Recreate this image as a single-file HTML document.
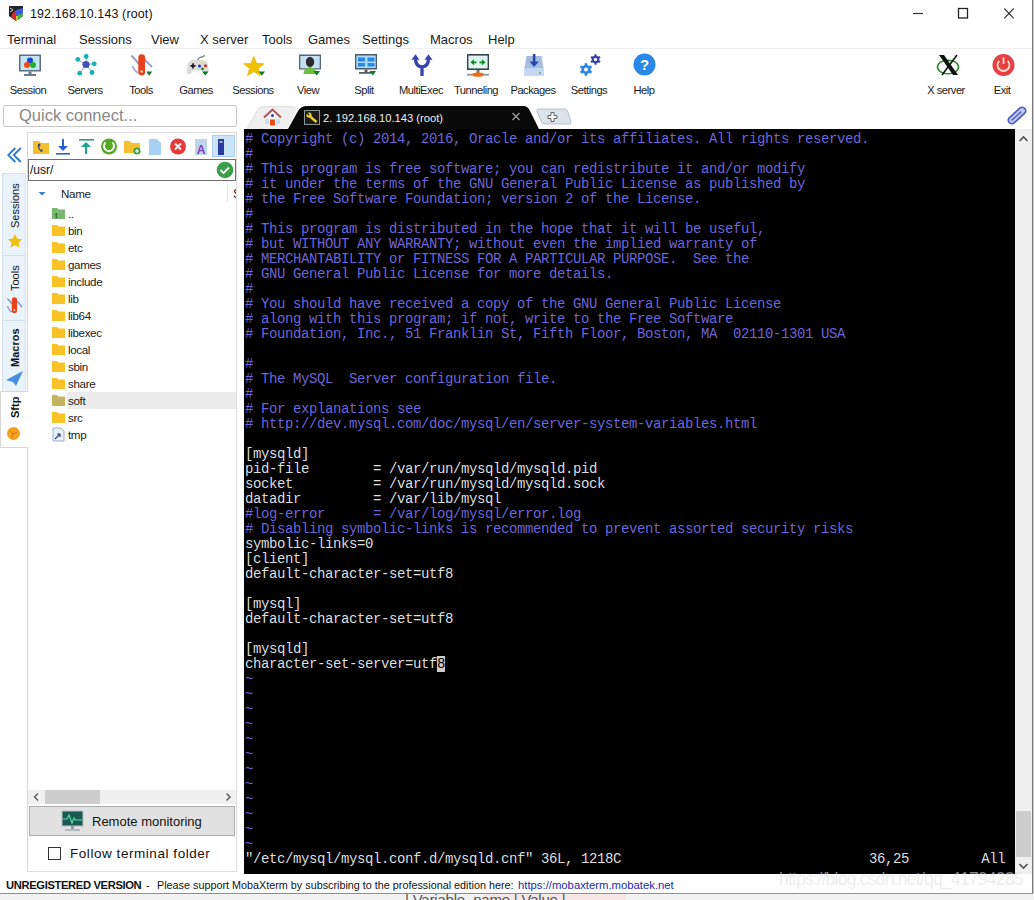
<!DOCTYPE html>
<html><head><meta charset="utf-8">
<style>
*{margin:0;padding:0;box-sizing:border-box}
html,body{width:1034px;height:900px;overflow:hidden;background:#fff;font-family:"Liberation Sans",sans-serif;color:#000}
.a{position:absolute}
#title{left:30px;top:6.5px;font-size:12.4px;letter-spacing:0.17px;color:#111}
.menu span{position:absolute;top:31.5px;font-size:13px;color:#1a1a1a}
.tb{position:absolute;top:84px;font-size:11.2px;letter-spacing:-0.5px;color:#1a1a1a;text-align:center;width:70px}
#term{left:244px;top:129px;width:771px;height:745px;background:#000}
#tt{position:absolute;left:245px;top:131.5px;font-family:"Liberation Mono",monospace;font-size:14px;letter-spacing:-0.4px;line-height:15px;white-space:pre;color:#dedede}
.c{color:#6e64dc}
</style></head><body>
<!-- title bar -->
<svg class="a" style="left:8px;top:5px" width="17" height="17" viewBox="0 0 17 17">
 <path d="M1 1 h14 v10 l-7 5 -7 -5z" fill="#222"/>
 <path d="M8 5 l7 -2 v8 l-7 5z" fill="#3a5ad8"/>
 <path d="M8 11 l7 0 -7 5z" fill="#e0c020"/>
 <path d="M4 9 l4 -4 v11 l-5 -4z" fill="#d82a2a"/>
 <path d="M10 10 l5 -2 v3 l-5 4z" fill="#40b040"/>
 <path d="M2 3 l3 2 -3 2" stroke="#fff" stroke-width="0.8" fill="none"/>
</svg>
<div id="title" class="a">192.168.10.143 (root)</div>
<svg class="a" style="left:900px;top:0" width="130" height="28" viewBox="900 0 130 28">
 <line x1="913" y1="13.5" x2="923" y2="13.5" stroke="#333" stroke-width="1.2"/>
 <rect x="958.5" y="8.5" width="9" height="9.5" fill="none" stroke="#222" stroke-width="1.3"/>
 <path d="M1004.3 8.5 L1013.7 18.3 M1013.7 8.5 L1004.3 18.3" stroke="#333" stroke-width="1.1"/>
</svg>
<!-- menu -->
<div class="menu">
<span style="left:7px">Terminal</span>
<span style="left:79px">Sessions</span>
<span style="left:151px">View</span>
<span style="left:200px">X server</span>
<span style="left:262px">Tools</span>
<span style="left:308px">Games</span>
<span style="left:362px">Settings</span>
<span style="left:430px">Macros</span>
<span style="left:488px">Help</span>
</div>
<div class="a" style="left:0;top:48px;width:1034px;height:1px;background:#efefef"></div>
<!-- toolbar icons -->
<svg class="a" style="left:0;top:48px" width="1034" height="36" viewBox="0 48 1034 36">
 <!-- Session -->
 <rect x="19" y="54.5" width="22" height="17" fill="#5e6e7c"/>
 <rect x="20.5" y="56" width="19" height="14" fill="#c4e4f6"/>
 <rect x="28.5" y="71.5" width="3" height="3" fill="#6e7a86"/>
 <rect x="24" y="74" width="12" height="2" fill="#6e7a86"/>
 <circle cx="30" cy="60.5" r="3" fill="#1a40d8"/>
 <circle cx="27" cy="65" r="3" fill="#f04a10"/>
 <circle cx="33" cy="65" r="3" fill="#20b030"/>
 <!-- Servers -->
 <g stroke="#8aa8d0" stroke-width="1"><line x1="86" y1="64.5" x2="77.8" y2="59.4"/><line x1="86" y1="64.5" x2="86.2" y2="56.5"/><line x1="86" y1="64.5" x2="94.2" y2="63.8"/><line x1="86" y1="64.5" x2="92" y2="72.5"/><line x1="86" y1="64.5" x2="79.7" y2="73.2"/></g>
 <g fill="#14b0b4"><circle cx="77.8" cy="59.4" r="2.4"/><circle cx="86.2" cy="56.5" r="2.4"/><circle cx="94.2" cy="63.8" r="2.4"/><circle cx="92" cy="72.5" r="2.4"/><circle cx="79.7" cy="73.2" r="2.4"/></g>
 <circle cx="86" cy="64.5" r="3.6" fill="#4050b8"/>
 <!-- Tools -->
 <path d="M131.5 55.5 L139 64" stroke="#98a4cc" stroke-width="2.2"/>
 <path d="M144 59 L152 67" stroke="#98a4cc" stroke-width="2"/>
 <path d="M132.5 66 q1 4 6 7" stroke="#a8a8d8" stroke-width="1.8" fill="none"/>
 <rect x="138.3" y="54.3" width="6.8" height="21.2" rx="3.4" fill="#e8401c"/>
 <circle cx="141.7" cy="71.5" r="1.2" fill="#ffe8d8"/>
 <path d="M146.2 71.5 h6 l-3 4.3z" fill="#107a20"/>
 <!-- Games -->
 <path d="M188 63 q2 -3 6 -3 h8 q4 0 5.5 3 l1 6 q0.5 4 -3 4 l-3 -2.5 h-9 l-3 3.5 q-3.5 1 -3.8 -2.5z" fill="#dcdcdc"/>
 <path d="M197.5 60 q1 -2.5 4 -3 q3 -0.5 3 -2" stroke="#808898" stroke-width="1.3" fill="none"/>
 <rect x="190.5" y="65" width="5" height="1.8" fill="#222"/><rect x="192.1" y="63.3" width="1.8" height="5.2" fill="#222"/>
 <circle cx="199.5" cy="66" r="1.5" fill="#1a2ac0"/><circle cx="205.5" cy="65.8" r="1.5" fill="#d02020"/><circle cx="202.2" cy="62.6" r="1.3" fill="#e8e070"/><circle cx="202.5" cy="69" r="1.4" fill="#208a20"/>
 <path d="M202 71.5 h6.5 l-3.25 4z" fill="#0a7a1a"/>
 <!-- Sessions star -->
 <path d="M253.80 56.20 L256.50 63.28 L264.07 63.66 L258.17 68.42 L260.15 75.74 L253.80 71.60 L247.45 75.74 L249.43 68.42 L243.53 63.66 L251.10 63.28z" fill="#f2c000" stroke="#e0b000" stroke-width="0.6"/>
 <path d="M258.5 71.5 h6.5 l-3.25 4.3z" fill="#0a7a1a"/>
 <!-- View -->
 <rect x="299" y="54.5" width="22" height="15" fill="#58646e"/>
 <rect x="300.3" y="56" width="19.4" height="12.3" fill="#c4e0f4"/>
 <path d="M303.5 74 q0 -6 6.5 -6.5 q6.5 0.5 6.5 6.5z" fill="#6cc040"/>
 <rect x="308.5" y="65" width="3" height="3" fill="#c0a020"/>
 <ellipse cx="310" cy="62" rx="4.2" ry="5" fill="#2a2a30"/>
 <path d="M313.5 71 h6.5 l-3.25 4.5z" fill="#0a7a1a"/>
 <!-- Split -->
 <rect x="355" y="54" width="22" height="15.5" fill="#505a64"/>
 <rect x="356.3" y="55.5" width="19.4" height="12.5" fill="#a8dcf8"/>
 <rect x="358" y="57.5" width="7" height="4" fill="#2a88e0"/><rect x="367.5" y="57.5" width="7" height="4" fill="#2a88e0"/>
 <rect x="358" y="63" width="7" height="3.5" fill="#2a88e0"/><rect x="367.5" y="63" width="7" height="3.5" fill="#2a88e0"/>
 <rect x="364.5" y="69.5" width="3" height="3" fill="#555e66"/><rect x="359" y="72" width="12" height="1.8" fill="#555e66"/>
 <path d="M369.5 71 h6.5 l-3.25 4.5z" fill="#0a7a1a"/>
 <!-- MultiExec -->
 <path d="M422 76 V67.5 M415.5 58.5 q0 8 6.5 8.5 q6.5 -0.5 6.5 -8.5" stroke="#3a44b0" stroke-width="3.3" fill="none"/>
 <path d="M411.5 59.8 L415.5 54.3 L419.5 59.8z M424.5 59.8 L428.5 54.3 L432.5 59.8z" fill="#3a44b0"/>
 <!-- Tunneling -->
 <rect x="467" y="54" width="22" height="16" fill="#3a424a"/>
 <rect x="468.4" y="55.6" width="19.2" height="12.8" fill="#dcf4f0"/>
 <path d="M470.5 62.3 l3.5 -3 v6z M485.5 62.3 l-3.5 -3 v6z" fill="#108a20"/><rect x="473" y="61.5" width="3.5" height="1.8" fill="#108a20"/><rect x="479.5" y="61.5" width="3.5" height="1.8" fill="#108a20"/>
 <rect x="476.5" y="70" width="3" height="3" fill="#707a70"/>
 <rect x="467" y="73.8" width="22" height="1.8" fill="#8898a8"/>
 <ellipse cx="478" cy="74.6" rx="6" ry="2.2" fill="#f06a10"/>
 <!-- Packages -->
 <path d="M526.5 56 h15 l2 12 v7.5 h-19 v-7.5z" fill="#a6bde2"/>
 <rect x="524.5" y="68" width="19" height="7.5" fill="#c4d6f0"/>
 <circle cx="540" cy="73" r="0.9" fill="#50b050"/>
 <rect x="532.8" y="54" width="2.6" height="9" fill="#2a48a8"/>
 <path d="M529.5 61.5 h9.2 l-4.6 5.5z" fill="#2a48a8"/>
 <!-- Settings gears -->
 <g transform="translate(586 69.5)">
  <circle r="4.6" fill="#2a86e8"/>
  <g stroke="#2a86e8" stroke-width="2.6"><line x1="0" y1="-6.3" x2="0" y2="6.3"/><line x1="-5.5" y1="-3.15" x2="5.5" y2="3.15"/><line x1="-5.5" y1="3.15" x2="5.5" y2="-3.15"/></g>
  <circle r="2" fill="#fff"/>
 </g>
 <g transform="translate(595.5 59.5)">
  <circle r="3.8" fill="#3040a8"/>
  <g stroke="#3040a8" stroke-width="2.2"><line x1="0" y1="-5.2" x2="0" y2="5.2"/><line x1="-4.5" y1="-2.6" x2="4.5" y2="2.6"/><line x1="-4.5" y1="2.6" x2="4.5" y2="-2.6"/></g>
  <circle r="1.7" fill="#fff"/>
 </g>
 <!-- Help -->
 <circle cx="644.5" cy="64.5" r="11" fill="#2a88e8"/>
 <text x="644.5" y="70" font-family="Liberation Sans" font-weight="bold" font-size="15" fill="#fff" text-anchor="middle">?</text>
 <!-- X server -->
 <ellipse cx="948" cy="67" rx="10.5" ry="6.8" stroke="#2a8a2a" stroke-width="1.6" fill="none"/>
 <path d="M939 55 h5 l14 20 h-5z" fill="#111"/>
 <path d="M957 55 l-15 20" stroke="#111" stroke-width="1.5"/>
 <!-- Exit -->
 <circle cx="1003.5" cy="65" r="11" fill="#e84040"/>
 <path d="M999.2 60.8 a6 6 0 1 0 8.6 0" stroke="#fde0d0" stroke-width="1.8" fill="none"/>
 <line x1="1003.5" y1="57.5" x2="1003.5" y2="64" stroke="#fde0d0" stroke-width="1.8"/>
</svg>
<!-- toolbar labels -->
<div class="tb" style="left:-7px">Session</div>
<div class="tb" style="left:50px">Servers</div>
<div class="tb" style="left:106px">Tools</div>
<div class="tb" style="left:161px">Games</div>
<div class="tb" style="left:218px">Sessions</div>
<div class="tb" style="left:273px">View</div>
<div class="tb" style="left:329px">Split</div>
<div class="tb" style="left:386px">MultiExec</div>
<div class="tb" style="left:441px">Tunneling</div>
<div class="tb" style="left:498px">Packages</div>
<div class="tb" style="left:554px">Settings</div>
<div class="tb" style="left:609px">Help</div>
<div class="tb" style="left:911px">X server</div>
<div class="tb" style="left:967px">Exit</div>
<!-- quick connect -->
<div class="a" style="left:3px;top:105px;width:234px;height:22px;border:1px solid #c8c8c8;border-radius:3px;font-size:16.5px;color:#888;padding:0 0 0 15px;line-height:19px">Quick connect...</div>
<!-- tabs -->
<svg class="a" style="left:240px;top:100px" width="794" height="32" viewBox="240 100 794 32">
 <path d="M246 129 L257 110 Q259 106 264 106 H293 Q297 106 296 110 L288 129z" fill="#f0eff0"/>
 <path d="M247 129 L257.5 110.5 Q259.5 106.5 264 106.5 H293" stroke="#e0e0e0" fill="none"/>
 <!-- house -->
 <path d="M265 124 h15 v2 h-15z" fill="#e8eef4"/>
 <path d="M266 118 l6.5 -6.5 6.5 6.5 v7 h-13z" fill="#f4f6f8"/>
 <rect x="265" y="119" width="4" height="5" fill="#c8dcf0"/>
 <rect x="276" y="119" width="4" height="5" fill="#c8dcf0"/>
 <path d="M264 117.5 l8.5 -8 8.5 8" stroke="#a85a60" stroke-width="2" fill="none"/>
 <rect x="270" y="119.5" width="5" height="6" fill="#e84a10"/>
 <circle cx="272.5" cy="115.5" r="1.5" fill="#2a4a70"/>
 <!-- active tab -->
 <path d="M288 129 L298 111 Q301 106 307 106 H523 Q528 106 530 111 L539 129z" fill="#0a0a0a"/>
 <rect x="304.5" y="110.5" width="15" height="14" fill="#1c1c1c" stroke="#8a9494"/>
 <path d="M309.5 116 L316.5 122" stroke="#f0d020" stroke-width="2.4"/>
 <circle cx="309" cy="115" r="2.6" fill="#f0d020"/>
 <path d="M307 113 l2 2" stroke="#1c1c1c" stroke-width="1.4"/>
 <path d="M512.5 113 l7 7 M519.5 113 l-7 7" stroke="#a8a8a8" stroke-width="1.1"/>
 <!-- new tab -->
 <path d="M538 109 H564 Q567 109 568 112 L571 122 Q571.5 124 569 124 H545 Q542 124 541 121 L537 112 Q536.5 109 538 109z" fill="#dde3ea" stroke="#b8c0c8"/>
 <path d="M551 112.5 h3 v3 h3 v3 h-3 v3 h-3 v-3 h-3 v-3 h3z" fill="#fff" stroke="#606060" stroke-width="1"/>
 <!-- paperclip -->
 <g transform="rotate(48 1017 115.5)">
  <rect x="1013.5" y="105" width="7" height="21" rx="3.5" fill="#c0c8f8" stroke="#4a58c0" stroke-width="1.6"/>
  <path d="M1017 123 V110" stroke="#4a58c0" stroke-width="1.4"/>
 </g>
</svg>
<div class="a" style="left:323px;top:112px;font-size:11.2px;color:#f0f0f0">2. 192.168.10.143 (root)</div>
<!-- left side tabs -->
<svg class="a" style="left:0;top:130px" width="28" height="320" viewBox="0 130 28 320">
 <path d="M15.3 148 l-7 7 7 7 M20.8 148 l-7 7 7 7" stroke="#2a78d0" stroke-width="1.8" fill="none"/>
 <rect x="2.5" y="173.5" width="23" height="82" fill="#eaf3fb" stroke="#d8e2ec"/>
 <rect x="2.5" y="255.5" width="23" height="65" fill="#eaf3fb" stroke="#d8e2ec"/>
 <rect x="2.5" y="320.5" width="23" height="71" fill="#eaf3fb" stroke="#d8e2ec"/>
 <rect x="0.5" y="391.5" width="27" height="56" fill="#fff" stroke="#d8d8d8"/>
 <rect x="27" y="392" width="2" height="55" fill="#fff"/>
 <path d="M15 234 l2.2 4.6 5 .6 -3.7 3.4 1 5 -4.5 -2.4 -4.5 2.4 1 -5 -3.7 -3.4 5 -.6z" fill="#f0c010"/>
 <path d="M7.5 298.5 L13 305" stroke="#8a98c0" stroke-width="1.6"/>
 <path d="M17 301 L22 307" stroke="#8a98c0" stroke-width="1.5"/>
 <path d="M7.5 306 q1 4 4.5 6" stroke="#a0a0d8" stroke-width="1.4" fill="none"/>
 <rect x="11.8" y="297.3" width="5.2" height="15.8" rx="2.6" fill="#e8401c"/>
 <circle cx="14.4" cy="310" r="0.9" fill="#ffe8d8"/>
 <path d="M6 380 l17 -9 -7 15 -3 -4z" fill="#4a90e0"/>
 <path d="M13 382 l10 -11 -8 9z" fill="#2a60b0"/>
 <circle cx="13.5" cy="433.5" r="6.5" fill="#f5a020"/>
 <path d="M10 431 l3 3 4 -2 M13 434 l-1 4" stroke="#e07010" stroke-width="1" fill="none"/>
 <text transform="translate(19 228) rotate(-90)" font-family="Liberation Sans" font-size="11" fill="#111">Sessions</text>
 <text transform="translate(19 291) rotate(-90)" font-family="Liberation Sans" font-size="11" fill="#111">Tools</text>
 <text transform="translate(19 367) rotate(-90)" font-family="Liberation Sans" font-size="11" font-weight="bold" fill="#111">Macros</text>
 <text transform="translate(19 418) rotate(-90)" font-family="Liberation Sans" font-size="11" font-weight="bold" fill="#111">Sftp</text>
</svg>
<!-- sftp panel -->
<div class="a" style="left:27px;top:132px;width:210px;height:740px;border:1px solid #dcdcdc;border-left-color:#d8d8d8;background:#fff"></div>
<div class="a" style="left:27px;top:392px;width:2px;height:55px;background:#fff"></div>
<div class="a" style="left:212px;top:135px;width:23px;height:22px;background:#cce4f7;border:1px solid #a8d0f0"></div>
<svg class="a" style="left:27px;top:132px" width="210" height="740" viewBox="27 132 210 740">
 <!-- sftp toolbar icons -->
 <path d="M33 141 h6 l2 2 h8 v11 h-16z" fill="#f5c030"/>
 <path d="M38 144 q-1 4 3 8 l2 -1 -1.5 -2 -1 1 q-1.5 -2 -1 -4 l1 0 -0.5 -2.5z" fill="#344a80"/>
 <rect x="62" y="139" width="2" height="9" fill="#2a60d0"/>
 <path d="M58 146 h10 l-5 5z" fill="#2a60d0"/>
 <rect x="56" y="153" width="14" height="1.6" fill="#2a60d0"/>
 <rect x="79" y="139" width="15" height="1.6" fill="#20a090"/>
 <path d="M81 147 h10 l-5 -5z" fill="#20a090"/>
 <rect x="85" y="146" width="2" height="8" fill="#20a090"/>
 <circle cx="109" cy="146.5" r="8" fill="#58a828"/>
 <path d="M105.5 142.5 a5 5 0 1 0 7 0" stroke="#fff" stroke-width="2" fill="none"/>
 <path d="M124 141 h6 l2 2 h8 v10 h-16z" fill="#f5c030"/>
 <circle cx="137" cy="151" r="3.6" fill="#40a040"/>
 <path d="M135 151 h4 M137 149 v4" stroke="#fff" stroke-width="1.2"/>
 <path d="M149 139 h8 l4 4 v12 h-12z" fill="#a8d0f5"/>
 <circle cx="178" cy="146.5" r="8" fill="#e83a3a"/>
 <path d="M175 143.5 l6 6 M181 143.5 l-6 6" stroke="#fff" stroke-width="1.8"/>
 <rect x="195" y="139" width="12" height="16" fill="#c0d4ee"/>
 <text x="201" y="154" font-family="Liberation Sans" font-weight="bold" font-size="12" fill="#8040c0" text-anchor="middle">A</text>
 <rect x="218" y="139" width="6" height="16" fill="#2a3aa0"/>
 <rect x="219.5" y="141" width="3" height="2" fill="#aab"/>
 <!-- path box -->
 <rect x="28.5" y="159.5" width="207" height="21" fill="#fff" stroke="#707070"/>
 <circle cx="225" cy="170" r="8.3" fill="#3aa048"/>
 <path d="M220.5 170 l3 3 5.5 -5.5" stroke="#fff" stroke-width="1.8" fill="none"/>
 <!-- header -->
 <path d="M38.5 192 h7 l-3.5 3.5z" fill="#3a80d0"/>
 <line x1="227.5" y1="183" x2="227.5" y2="202" stroke="#e4e4e4"/>
 <!-- highlight soft -->
 <rect x="67" y="392" width="169" height="17" fill="#ececec"/>
 <!-- folder icons -->
 <g id="fi">
 <path d="M52 208 h5 l1.5 1.5 h6.5 v9.5 h-13z" fill="#7ab870"/>
 <text x="55" y="218" font-family="Liberation Sans" font-weight="bold" font-size="8" fill="#2a6a2a">t</text>
 </g>
 <g fill="#f9c226">
 <path d="M52 225 h5 l1.5 1.5 h6.5 v9.5 h-13z"/>
 <path d="M52 242 h5 l1.5 1.5 h6.5 v9.5 h-13z"/>
 <path d="M52 259 h5 l1.5 1.5 h6.5 v9.5 h-13z"/>
 <path d="M52 276 h5 l1.5 1.5 h6.5 v9.5 h-13z"/>
 <path d="M52 293 h5 l1.5 1.5 h6.5 v9.5 h-13z"/>
 <path d="M52 310 h5 l1.5 1.5 h6.5 v9.5 h-13z"/>
 <path d="M52 327 h5 l1.5 1.5 h6.5 v9.5 h-13z"/>
 <path d="M52 344 h5 l1.5 1.5 h6.5 v9.5 h-13z"/>
 <path d="M52 361 h5 l1.5 1.5 h6.5 v9.5 h-13z"/>
 <path d="M52 378 h5 l1.5 1.5 h6.5 v9.5 h-13z"/>
 <path d="M52 412 h5 l1.5 1.5 h6.5 v9.5 h-13z"/>
 </g>
 <path d="M52 395 h5 l1.5 1.5 h6.5 v9.5 h-13z" fill="#c4b460"/>
 <path d="M53 428 h8 l3 3 v10 h-11z" fill="#e8f0fa" stroke="#8aa0c0" stroke-width="0.8"/>
 <path d="M55 439 l5 -5 M57 434 h3 v3" stroke="#2a4a80" stroke-width="1.2" fill="none"/>
 <!-- h scrollbar -->
 <rect x="28" y="790" width="208" height="14" fill="#f0f0f0"/>
 <rect x="45" y="790" width="55" height="14" fill="#cdcdcd"/>
 <path d="M38 793.5 l-3.5 3.5 3.5 3.5 M226.5 793.5 l3.5 3.5 -3.5 3.5" stroke="#606060" stroke-width="1.5" fill="none"/>
 <!-- remote monitoring button -->
 <rect x="29.5" y="806.5" width="205" height="29" fill="#e1e1e1" stroke="#adadad"/>
 <rect x="62" y="811" width="21" height="15" fill="#1a5a50" stroke="#b8c4c8" stroke-width="1"/>
 <path d="M63 819 h4 l2 -4 3 8 2 -5 1.5 2 h7" stroke="#50e0a0" stroke-width="1.2" fill="none"/>
 <rect x="71" y="826" width="3" height="3" fill="#909aa0"/>
 <rect x="65" y="829" width="15" height="2" fill="#b0b8c0"/>
 <!-- checkbox -->
 <rect x="48.5" y="847.5" width="12" height="12" fill="#fff" stroke="#333"/>
</svg>
<div class="a" style="left:30px;top:162.5px;font-size:12px;color:#111">/usr/</div>
<div class="a" style="left:61px;top:186.5px;font-size:11.6px;letter-spacing:-0.3px;color:#1a1a1a">Name</div>
<div class="a" style="left:233px;top:186.5px;font-size:12px;color:#1a1a1a;width:3px;overflow:hidden">S</div>
<div class="a" style="left:68px;top:204.5px;font-size:11.6px;letter-spacing:-0.35px;line-height:17px;color:#1a1a1a;white-space:pre">..
bin
etc
games
include
lib
lib64
libexec
local
sbin
share
soft
src
tmp</div>
<div class="a" style="left:92px;top:814px;font-size:13px;color:#111">Remote monitoring</div>
<div class="a" style="left:70px;top:846px;font-size:13.5px;color:#111;letter-spacing:0.55px">Follow terminal folder</div>
<!-- terminal -->
<div id="term" class="a"></div>
<div id="tt"><span class="c"># Copyright (c) 2014, 2016, Oracle and/or its affiliates. All rights reserved.
#
# This program is free software; you can redistribute it and/or modify
# it under the terms of the GNU General Public License as published by
# the Free Software Foundation; version 2 of the License.
#
# This program is distributed in the hope that it will be useful,
# but WITHOUT ANY WARRANTY; without even the implied warranty of
# MERCHANTABILITY or FITNESS FOR A PARTICULAR PURPOSE.  See the
# GNU General Public License for more details.
#
# You should have received a copy of the GNU General Public License
# along with this program; if not, write to the Free Software
# Foundation, Inc., 51 Franklin St, Fifth Floor, Boston, MA  02110-1301 USA

#
# The MySQL  Server configuration file.
#
# For explanations see
# http://dev.mysql.com/doc/mysql/en/server-system-variables.html
</span>
[mysqld]
pid-file        = /var/run/mysqld/mysqld.pid
socket          = /var/run/mysqld/mysqld.sock
datadir         = /var/lib/mysql
<span class="c">#log-error      = /var/log/mysql/error.log
# Disabling symbolic-links is recommended to prevent assorted security risks</span>
symbolic-links=0
[client]
default-character-set=utf8

[mysql]
default-character-set=utf8

[mysqld]
character-set-server=utf<span style="background:#ccc;color:#000">8</span>
<span class="c">~
~
~
~
~
~
~
~
~
~
~
~</span>
"/etc/mysql/mysql.conf.d/mysqld.cnf" 36L, 1218C                               36,25         All</div>
<!-- scrollbar -->
<div class="a" style="left:1015px;top:129px;width:17px;height:745px;background:#f0f0f0"></div>
<div class="a" style="left:1016px;top:811px;width:15px;height:46px;background:#cdcdcd"></div>
<svg class="a" style="left:1015px;top:129px" width="17" height="744" viewBox="1015 129 17 744">
 <path d="M1019.5 141 l4 -4 4 4" stroke="#505050" stroke-width="1.6" fill="none"/>
 <path d="M1019.5 864 l4 4 4 -4" stroke="#505050" stroke-width="1.6" fill="none"/>
</svg>
<div class="a" style="left:1032px;top:0;width:1px;height:893px;background:#777"></div><div class="a" style="left:1033px;top:0;width:1px;height:900px;background:#cfcfcf"></div>
<!-- status bar -->
<div class="a" style="left:0;top:874px;width:1032px;height:19px;background:#fff"></div>
<div class="a" style="left:6px;top:878.5px;font-size:11.2px;letter-spacing:-0.35px;font-weight:bold;color:#111">UNREGISTERED VERSION</div>
<div class="a" style="left:146px;top:878.5px;font-size:11px;color:#111">-</div><div class="a" style="left:157px;top:878.5px;font-size:10.8px;color:#111">Please support MobaXterm by subscribing to the professional edition here:</div>
<div class="a" style="left:518px;top:878.5px;font-size:11.3px;color:#1a2ab0">https://mobaxterm.mobatek.net</div>
<div class="a" style="left:0;top:893px;width:1034px;height:7px;background:#f2f2f2"></div>
<div class="a" style="left:0;top:893px;width:1033px;height:1px;background:#909090"></div>
<div class="a" style="left:483px;top:894px;width:143px;height:6px;background:#f6e6e6"></div>
<div class="a" style="left:405px;top:891px;font-size:15px;letter-spacing:-0.2px;color:#555;height:12px;overflow:hidden;white-space:pre;clip-path:inset(3px 0 0 0)">| Variable_name | Value |</div>
<div class="a" style="left:779px;top:868.5px;font-size:17.5px;color:rgba(225,225,225,0.6);letter-spacing:-0.75px">https://blog.csdn.net/qq_41794285</div>
</body></html>
